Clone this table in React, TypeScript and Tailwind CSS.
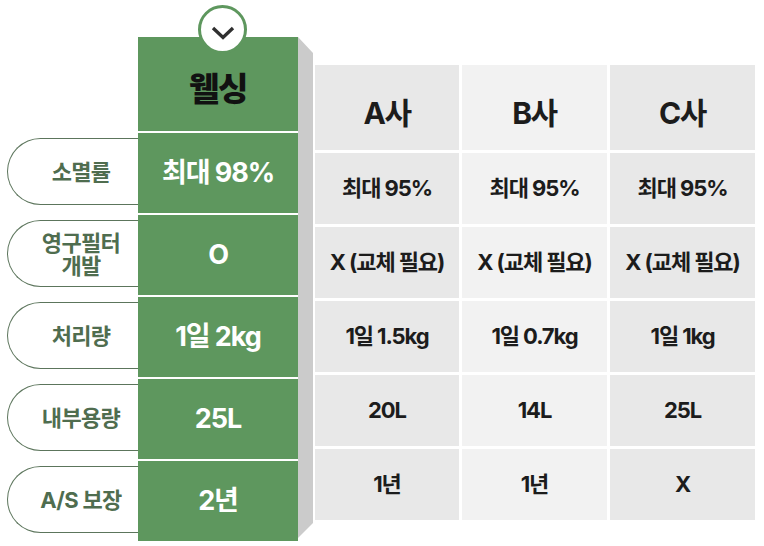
const labels = ["소멸률", "영구필터\n개발", "처리량", "내부용량", "A/S 보장"];
const ours = ["최대 98%", "O", "1일 2kg", "25L", "2년"];
const brands = ["A사", "B사", "C사"];
const rows = [
  ["최대 95%", "최대 95%", "최대 95%"],
  ["X (교체 필요)", "X (교체 필요)", "X (교체 필요)"],
  ["1일 1.5kg", "1일 0.7kg", "1일 1kg"],
  ["20L", "14L", "25L"],
  ["1년", "1년", "X"],
];

const font = { fontFamily: 'Inter, "Noto Sans CJK KR", sans-serif' };

function cellBg(i: number) {
  return i === 1 ? "bg-[#f2f2f2]" : "bg-[#e8e8e8]";
}

export default function App() {
  return (
    <div className="flex w-[764px] h-[546px] bg-white overflow-hidden" style={font}>
      {/* row labels */}
      <div className="flex flex-col gap-[2px] pl-[7px] pt-[133px]">
        {labels.map((l) => (
          <div key={l} className="h-[80px] pt-[5px]">
            <div className="flex h-[67px] w-[131px] items-center justify-center rounded-l-full border-[1.5px] border-r-0 border-[#5c755c] pl-[16px] pt-[2px]">
              <span className="whitespace-pre-line text-center text-[22px] font-bold leading-[23px] tracking-[-0.03em] text-[#4f6d4f]">
                {l}
              </span>
            </div>
          </div>
        ))}
      </div>

      {/* our product */}
      <div className="relative mt-[37px] flex w-[160px] flex-col gap-[2px] self-start">
        <div className="absolute left-[60px] top-[-32px] flex h-[49px] w-[49px] items-center justify-center rounded-full border-[3px] border-[#5e975e] bg-white">
          <svg width="24" height="14" viewBox="0 0 24 14" className="mt-[6px]">
            <path d="M2 2 L12 11.5 L22 2" fill="none" stroke="#2f2f2f" strokeWidth="3.4" />
          </svg>
        </div>
        <div className="flex h-[94px] items-center justify-center bg-[#5e975e] pt-[12px] text-[33px] font-extrabold tracking-[-0.04em] text-[#111]">
          웰싱
        </div>
        {ours.map((v) => (
          <div key={v} className="flex h-[80px] items-center justify-center bg-[#5e975e] text-[27px] font-bold tracking-[-0.04em] text-white">
            {v}
          </div>
        ))}
      </div>

      {/* side shade */}
      <div className="mt-[37px] h-[501px] w-[15px] bg-[#cbcbcb] [clip-path:polygon(0_0,100%_16px,100%_calc(100%-15px),0_100%)]" />

      {/* competitors */}
      <div className="ml-[2px] mt-[65px] grid grid-cols-[144px_145px_145px] grid-rows-[85px_repeat(5,71px)] gap-[3px] self-start">
        {brands.map((b, i) => (
          <div key={b} className={`flex items-center justify-center pt-[11px] text-[30px] font-bold tracking-[-0.05em] text-[#1c1c1c] ${cellBg(i)}`}>
            {b}
          </div>
        ))}
        {rows.map((r) =>
          r.map((v, i) => (
            <div key={i + v} className={`flex items-center justify-center text-[22px] font-bold tracking-[-0.05em] text-[#1c1c1c] ${cellBg(i)}`}>
              {v}
            </div>
          ))
        )}
      </div>
    </div>
  );
}
